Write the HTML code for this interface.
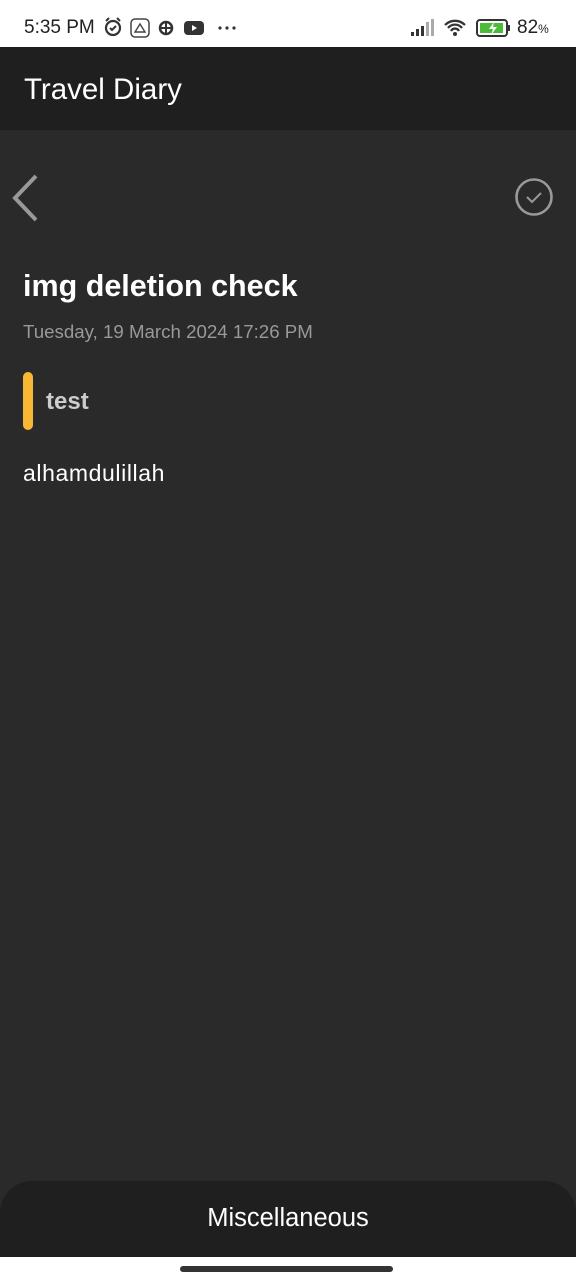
<!DOCTYPE html>
<html><head><meta charset="utf-8"><style>
*{margin:0;padding:0;box-sizing:border-box}
body{width:576px;height:1280px;background:#2a2a2a;font-family:"Liberation Sans","DejaVu Sans",sans-serif;position:relative;overflow:hidden}
.sb{position:absolute;top:0;left:0;width:576px;height:47px;background:#fff;color:#222;font-size:19px}
.hd{position:absolute;top:47px;left:0;width:576px;height:83px;background:#1f1f1f}
.hd span{position:absolute;left:24px;top:26px;color:#fff;font-size:29.5px}
.t{position:absolute;color:#fff;white-space:nowrap}
.bot{position:absolute;top:1181px;left:0;width:576px;height:77px;background:#1f1f1f;border-radius:32px 32px 0 0}
.bot span{position:absolute;width:100%;text-align:center;top:23px;color:#fff;font-size:25.5px}
.nav{position:absolute;top:1257px;left:0;width:576px;height:23px;background:#fff}
.ind{position:absolute;left:180px;top:1266px;width:213px;height:6px;border-radius:3px;background:#333}
</style></head><body>
<div class="sb">
<span style="position:absolute;left:24px;top:17px">5:35 PM</span>
<svg style="position:absolute;left:102px;top:16px" width="140" height="24" viewBox="0 0 140 24">
<circle cx="11" cy="12" r="7" fill="none" stroke="#333" stroke-width="2.2"/><path d="M8 12l2 2 4-4M4 5l3-3M18 5l-3-3" stroke="#333" stroke-width="2" fill="none"/>
<rect x="29" y="3" width="18" height="18" rx="4" fill="none" stroke="#444" stroke-width="1.5"/><path d="M33 16h10l-5-8z" fill="none" stroke="#444" stroke-width="1.4"/>
<circle cx="64" cy="12" r="6" fill="none" stroke="#333" stroke-width="2.5"/><path d="M58 12h12M64 6v12" stroke="#333" stroke-width="2"/>
<rect x="82" y="5" width="20" height="14" rx="4" fill="#333"/><path d="M90 9v6l5-3z" fill="#fff"/>
<circle cx="118" cy="12" r="1.6" fill="#333"/><circle cx="125" cy="12" r="1.6" fill="#333"/><circle cx="132" cy="12" r="1.6" fill="#333"/>
</svg>
<svg style="position:absolute;left:410px;top:16px" width="105" height="24" viewBox="0 0 105 24">
<rect x="1" y="16" width="3" height="4" fill="#333"/><rect x="6" y="13" width="3" height="7" fill="#333"/><rect x="11" y="10" width="3" height="10" fill="#333"/><rect x="16" y="6" width="3" height="14" fill="#aaa"/><rect x="21" y="3" width="3" height="17" fill="#aaa"/>
<path d="M35 9a14 14 0 0 1 20 0M38 12a9 9 0 0 1 14 0M41 15a4.5 4.5 0 0 1 8 0" stroke="#333" stroke-width="2.3" fill="none"/><circle cx="45" cy="18" r="2" fill="#333"/>
<rect x="67" y="4" width="30" height="16" rx="3" fill="#fff" stroke="#333" stroke-width="2"/><rect x="70" y="7" width="23" height="10" fill="#4cbb3a"/><path d="M84 6l-5 7h4l-2 6 6-8h-4z" fill="#fff"/><rect x="98" y="9" width="2" height="6" fill="#333"/>
</svg>
<span style="position:absolute;left:517px;top:17px">82<small style="font-size:12px">%</small></span>
</div>
<div class="hd"><span>Travel Diary</span></div>
<svg style="position:absolute;left:8px;top:172px" width="36" height="52" viewBox="0 0 36 52"><path d="M28 4L7 26l21 22" stroke="#999" stroke-width="4" fill="none"/></svg>
<svg style="position:absolute;left:514px;top:177px" width="40" height="40" viewBox="0 0 40 40"><circle cx="20" cy="20" r="17.5" fill="none" stroke="#999" stroke-width="2.6"/><path d="M13 20l5 5 9-9" stroke="#999" stroke-width="2" fill="none"/></svg>
<div class="t" style="left:23px;top:269px;font-size:30.5px;font-weight:bold">img deletion check</div>
<div class="t" style="left:23px;top:321px;font-size:18.7px;color:#999">Tuesday, 19 March 2024 17:26 PM</div>
<div style="position:absolute;left:23px;top:372px;width:10px;height:58px;border-radius:5px;background:#f8b833"></div>
<div class="t" style="left:46px;top:388px;font-size:24px;color:#ccc;font-weight:bold">test</div>
<div class="t" style="left:23px;top:460px;font-size:23px;letter-spacing:0.6px">alhamdulillah</div>
<div class="bot"><span>Miscellaneous</span></div>
<div class="nav"></div><div class="ind"></div>
</body></html>
